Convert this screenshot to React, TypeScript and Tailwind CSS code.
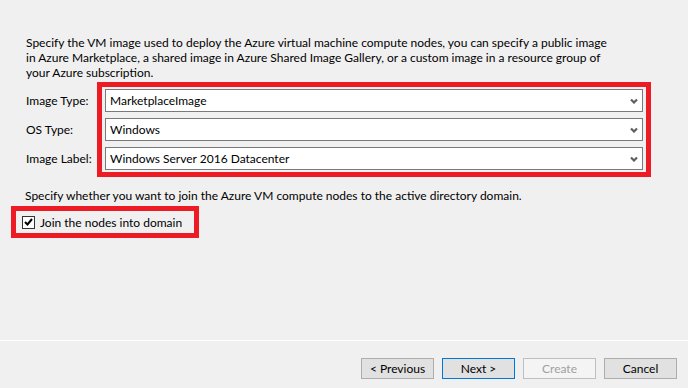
import { ReactNode } from "react";

const FONT = "font-['Lato','Noto_Sans',sans-serif]";

function Chevron() {
  return (
    <svg width="8" height="6" viewBox="0 0 8 6" className="shrink-0">
      <path d="M1 1.5 L4 4.5 L7 1.5" fill="none" stroke="#5f5f5f" strokeWidth="2.2" />
    </svg>
  );
}

function Select({ value }: { value: string }) {
  return (
    <div className="flex h-[23px] items-center justify-between border border-[#7a7a7a] bg-white pl-[4px] pr-[4px]">
      <span className="text-black">{value}</span>
      <Chevron />
    </div>
  );
}

function Label({ children }: { children: ReactNode }) {
  return <div className="flex h-[23px] items-center whitespace-nowrap">{children}</div>;
}

function WizardButton({
  children,
  variant = "normal",
}: {
  children: ReactNode;
  variant?: "normal" | "default" | "disabled";
}) {
  const styles = {
    normal: "border-[#adadad] bg-[#e1e1e1] text-black",
    default: "border-[#0078d7] bg-[#e1e1e1] text-black",
    disabled: "border-[#bfbfbf] bg-[#f4f4f4] text-[#a0a0a0]",
  }[variant];
  return (
    <button
      className={`flex h-[21px] w-[73px] items-center justify-center border ${styles}`}
    >
      {children}
    </button>
  );
}

export default function App() {
  return (
    <div
      className={`flex h-[388px] w-[688px] flex-col bg-[#f0f0f0] text-[12px] leading-[15px] text-black ${FONT}`}
    >
      {/* Body */}
      <div className="h-[340px] pt-[35px]">
        <p className="whitespace-nowrap pl-[26px]">
          Specify the VM image used to deploy the Azure virtual machine compute nodes, you can specify a public image
          <br />
          in Azure Marketplace, a shared image in Azure Shared Image Gallery, or a custom image in a resource group of
          <br />
          your Azure subscription.
        </p>

        {/* Image selection */}
        <div className="mt-[2px] flex pl-[26px]">
          <div className="flex w-[71px] flex-col gap-[6px] pt-[7px]">
            <Label>Image Type:</Label>
            <Label>OS Type:</Label>
            <Label>Image Label:</Label>
          </div>
          <div className="flex w-[554px] flex-col gap-[6px] border-[5px] border-[#ed1c24] px-[3px] py-[2px]">
            <Select value="MarketplaceImage" />
            <Select value="Windows" />
            <Select value="Windows Server 2016 Datacenter" />
          </div>
        </div>

        <p className="mt-[11px] pl-[25px]">
          Specify whether you want to join the Azure VM compute nodes to the active directory domain.
        </p>

        {/* Domain join */}
        <div className="ml-[11px] mt-[3px] flex h-[32px] w-[188px] items-center gap-[5px] border-[5px] border-[#ed1c24] pl-[6px]">
          <span className="flex h-[13px] w-[13px] items-center justify-center border border-[#333333] bg-white">
            <svg width="9" height="8" viewBox="0 0 9 8">
              <path d="M1 4 L3.5 6.5 L8 1" fill="none" stroke="#000" strokeWidth="2" />
            </svg>
          </span>
          <span>Join the nodes into domain</span>
        </div>
      </div>

      {/* Footer */}
      <div className="flex flex-1 justify-end gap-[8px] border-t border-white pr-[11px] pt-[17px]">
        <WizardButton>&lt; Previous</WizardButton>
        <WizardButton variant="default">Next &gt;</WizardButton>
        <WizardButton variant="disabled">Create</WizardButton>
        <WizardButton>Cancel</WizardButton>
      </div>
    </div>
  );
}
